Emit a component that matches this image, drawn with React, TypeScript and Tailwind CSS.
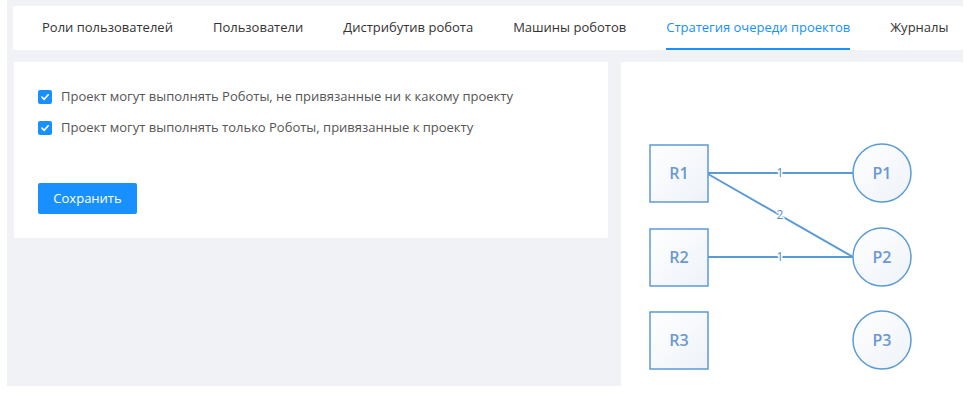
import React from "react";

const tabs = [
  "Роли пользователей",
  "Пользователи",
  "Дистрибутив робота",
  "Машины роботов",
  "Стратегия очереди проектов",
  "Журналы",
];

const options = [
  "Проект могут выполнять Роботы, не привязанные ни к какому проекту",
  "Проект могут выполнять только Роботы, привязанные к проекту",
];

function Check() {
  return (
    <span className="flex h-[14px] w-[14px] items-center justify-center rounded-[2px] bg-[#1890ff]">
      <svg width="10" height="10" viewBox="0 0 10 10" fill="none">
        <path d="M2 5.2 L4.2 7.3 L8.2 2.8" stroke="white" strokeWidth="1.7" strokeLinecap="round" strokeLinejoin="round" />
      </svg>
    </span>
  );
}

function Diagram() {
  const blue = "#5b9bd5";
  const rows = [111, 195, 278];
  return (
    <svg width="353" height="335" viewBox="0 0 353 335">
      <defs>
        <linearGradient id="nodefill" x1="0" y1="0" x2="1" y2="1">
          <stop offset="0" stopColor="#ffffff" />
          <stop offset="1" stopColor="#eef2f8" />
        </linearGradient>
      </defs>
      <line x1="87" y1="111" x2="232" y2="111" stroke={blue} strokeWidth="2" />
      <line x1="87" y1="112" x2="232" y2="195" stroke={blue} strokeWidth="2" />
      <line x1="87" y1="195" x2="232" y2="195" stroke={blue} strokeWidth="2" />
      {rows.map((cy, i) => (
        <g key={i}>
          <rect x="29" y={cy - 28} width="58" height="57" fill="url(#nodefill)" stroke={blue} strokeWidth="1.5" />
          <text x="58" y={cy + 6} textAnchor="middle" fontSize="16" fontWeight="600" fill="#6a98cf" fontFamily="Open Sans, sans-serif">
            R{i + 1}
          </text>
          <circle cx="261" cy={cy} r="29" fill="url(#nodefill)" stroke={blue} strokeWidth="1.5" />
          <text x="261" y={cy + 6} textAnchor="middle" fontSize="16" fontWeight="600" fill="#6a98cf" fontFamily="Open Sans, sans-serif">
            P{i + 1}
          </text>
        </g>
      ))}
      {[
        [159, 111, "1"],
        [159, 153, "2"],
        [159, 195, "1"],
      ].map(([x, y, t], i) => (
        <text
          key={i}
          x={x as number}
          y={(y as number) + 4}
          textAnchor="middle"
          fontSize="12"
          fill="#5b8dc8"
          stroke="white"
          strokeWidth="3"
          paintOrder="stroke"
          fontFamily="Open Sans, sans-serif"
        >
          {t}
        </text>
      ))}
    </svg>
  );
}

export default function App() {
  return (
    <div className="h-[397px] w-[974px] overflow-hidden bg-white font-['Open_Sans',sans-serif]">
      {/* шапка с вкладками */}
      <div className="ml-[7px] w-[956px] bg-[#f0f2f5] pl-[6px] pt-[6px] pb-[12px]">
        <div className="flex h-[44px] items-stretch gap-10 overflow-hidden bg-white pl-[29px] text-[13px] text-[#333]">
          {tabs.map((t, i) => (
            <div
              key={t}
              className={
                i === 4
                  ? "flex shrink-0 items-center whitespace-nowrap border-b-2 border-[#1890ff] pt-[2px] text-[#1890ff]"
                  : "flex shrink-0 items-center whitespace-nowrap"
              }
            >
              {t}
            </div>
          ))}
        </div>
      </div>

      <div className="flex">
        <div className="ml-[7px] h-[324px] w-[614px] bg-[#f0f2f5] pl-[7px]">
          <div className="h-[176px] w-[594px] bg-white pl-[24px] pt-[26px]">
            <div className="flex flex-col gap-[14px]">
              {options.map((o) => (
                <label key={o} className="flex h-[17px] items-center gap-[9px] text-[13px] text-[#555]">
                  <Check />
                  <span>{o}</span>
                </label>
              ))}
            </div>
            <button className="mt-[47px] h-[31px] w-[99px] rounded-[2px] bg-[#1890ff] text-[13px] text-white">
              Сохранить
            </button>
          </div>
        </div>
        <div className="flex-1 bg-white">
          <Diagram />
        </div>
      </div>
    </div>
  );
}
